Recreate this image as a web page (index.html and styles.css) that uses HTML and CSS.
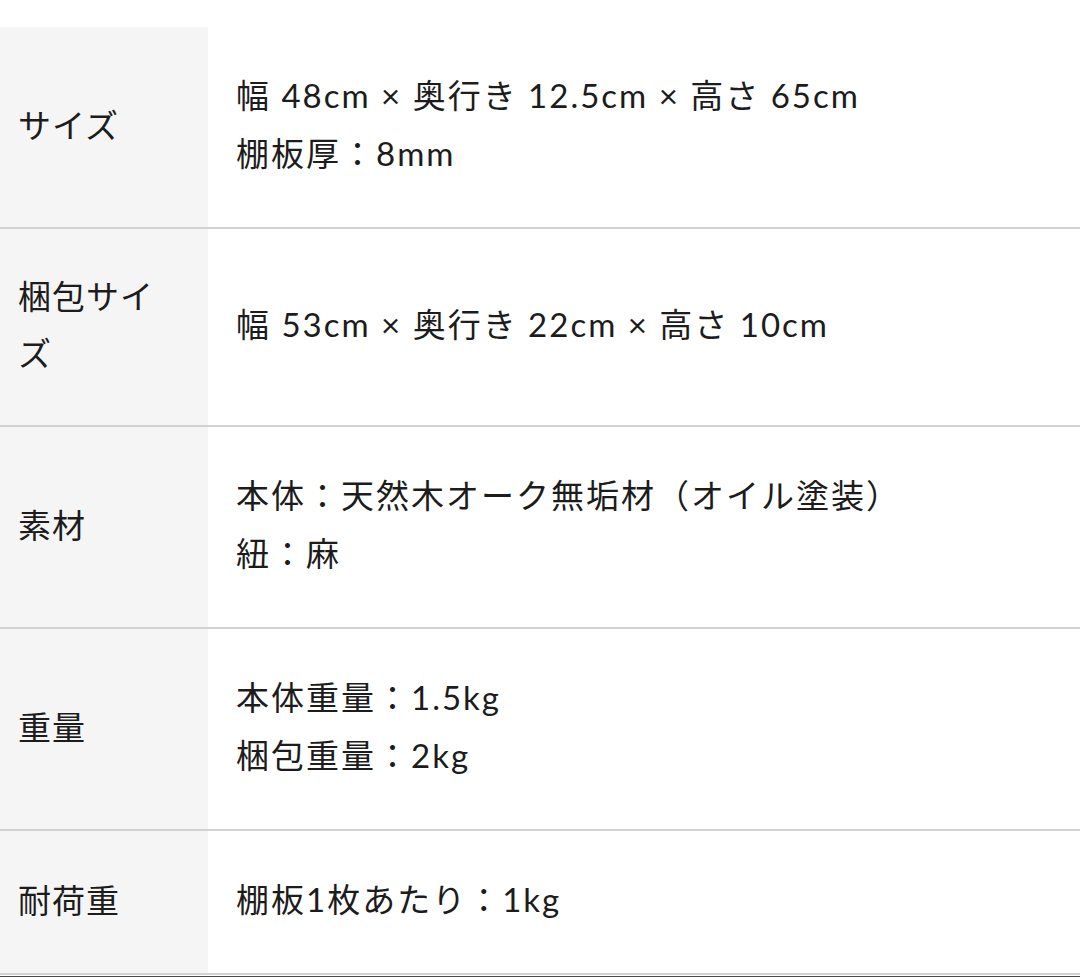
FILE: index.html
```html
<!DOCTYPE html>
<html lang="ja">
<head>
<meta charset="utf-8">
<link rel="stylesheet" href="styles.css">
</head>
<body>
<div class="spec">
  <div class="row">
    <div class="label">サイズ</div>
    <div class="value">幅 48cm × 奥行き 12.5cm × 高さ 65cm<br>棚板厚：8mm</div>
  </div>
  <div class="row">
    <div class="label">梱包サイズ</div>
    <div class="value">幅 53cm × 奥行き 22cm × 高さ 10cm</div>
  </div>
  <div class="row">
    <div class="label">素材</div>
    <div class="value">本体：天然木オーク無垢材（オイル塗装）<br>紐：麻</div>
  </div>
  <div class="row">
    <div class="label">重量</div>
    <div class="value">本体重量：1.5kg<br>梱包重量：2kg</div>
  </div>
  <div class="row">
    <div class="label">耐荷重</div>
    <div class="value">棚板1枚あたり：1kg</div>
  </div>
  <div class="bottom-edge"></div>
</div>
</body>
</html>
```
FILE: styles.css
```css
html, body {
  margin: 0;
  padding: 0;
  background: #ffffff;
}
body {
  font-family: "Lato", "Noto Sans CJK JP", sans-serif;
  color: #1c1c1c;
  font-size: 33px;
}
.spec {
  padding-top: 27px;
}
.row {
  display: grid;
  grid-template-columns: 208px 1fr;
  border-bottom: 2px solid #d2d2d2;
}
.label {
  background: #f5f5f5;
  padding: 39px 30px 43px 18px;
  line-height: 57px;
  display: flex;
  align-items: center;
  letter-spacing: 1px;
}
.value {
  padding: 39px 0 45px 28px;
  line-height: 58px;
  display: flex;
  align-items: center;
  letter-spacing: 2px;
}
.bottom-edge {
  height: 3px;
  margin-top: 1px;
  background: #4a4a4a;
}
```
